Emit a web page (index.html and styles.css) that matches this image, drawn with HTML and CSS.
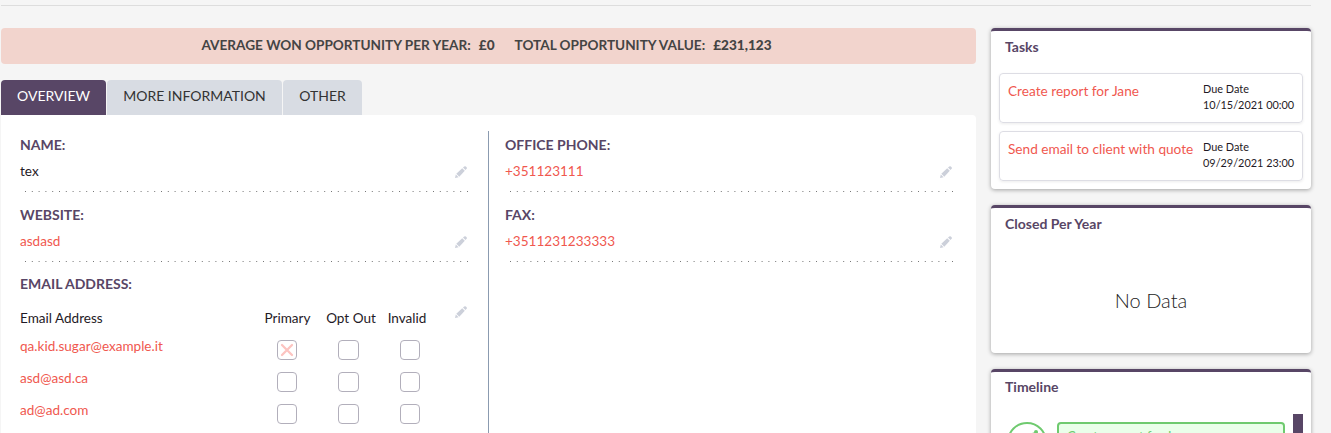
FILE: index.html
```
<!DOCTYPE html>
<html lang="en">
<head>
<meta charset="utf-8">
<title>Account</title>
<link rel="stylesheet" href="styles.css">
</head>
<body>
<svg class="defs" width="0" height="0">
  <symbol id="pencil" viewBox="0 0 12 12"><path d="M0 12 .8 8.4 3.6 11.2ZM1.3 7.7 7.2 2.2 9.8 4.8 4.3 10.7ZM8 1.5 9.2.5Q10.1-.2 10.9.5L11.6 1.2Q12.3 2 11.6 2.8L10.5 4Z"/></symbol>
  <symbol id="dots" viewBox="0 0 444 1"><path d="M0 .5H444" stroke="#777" stroke-width="1" stroke-dasharray="1 5.8" fill="none"/></symbol>
</svg>
<div class="page">
  <hr class="rule">
  <div class="columns">
    <main class="main">
      <div class="insight"><span class="term">AVERAGE WON OPPORTUNITY PER YEAR:</span><b class="avg">£0</b><span class="term total">TOTAL OPPORTUNITY VALUE:</span><b>£231,123</b></div>
      <nav class="tabs">
        <a class="tab active">OVERVIEW</a><a class="tab more">MORE INFORMATION</a><a class="tab other">OTHER</a>
      </nav>
      <section class="detail">
        <div class="col">
          <div class="field"><div class="label">NAME:</div><div class="value plain"><span>tex</span><svg class="edit"><use href="#pencil"/></svg></div><svg class="dots"><use href="#dots"/></svg></div>
          <div class="field"><div class="label">WEBSITE:</div><div class="value"><span>asdasd</span><svg class="edit"><use href="#pencil"/></svg></div><svg class="dots"><use href="#dots"/></svg></div>
          <div class="field">
            <div class="label email-label">EMAIL ADDRESS:</div>
            <div class="email-wrap">
              <div class="emails">
                <span class="head">Email Address</span><span class="head c">Primary</span><span class="head c optout">Opt Out</span><span class="head c invalid">Invalid</span>
                <span class="mail">qa.kid.sugar@example.it</span><i class="box"><svg class="cross" viewBox="0 0 14 14"><path d="M2 2 12 12M12 2 2 12"/></svg></i><i class="box wide"></i><i class="box"></i>
                <span class="mail">asd@asd.ca</span><i class="box"></i><i class="box wide"></i><i class="box"></i>
                <span class="mail">ad@ad.com</span><i class="box"></i><i class="box wide"></i><i class="box"></i>
              </div>
              <svg class="edit"><use href="#pencil"/></svg>
            </div>
          </div>
        </div>
        <div class="col right">
          <div class="field"><div class="label">OFFICE PHONE:</div><div class="value"><span>+351123111</span><svg class="edit"><use href="#pencil"/></svg></div><svg class="dots"><use href="#dots"/></svg></div>
          <div class="field"><div class="label">FAX:</div><div class="value"><span>+3511231233333</span><svg class="edit"><use href="#pencil"/></svg></div><svg class="dots"><use href="#dots"/></svg></div>
        </div>
      </section>
    </main>
    <aside class="side">
      <section class="card tasks">
        <h2>Tasks</h2>
        <div class="task"><a>Create report for Jane</a><div class="due">Due Date<br>10/15/2021 00:00</div></div>
        <div class="task"><a>Send email to client with quote</a><div class="due">Due Date<br>09/29/2021 23:00</div></div>
      </section>
      <section class="card chart"><h2>Closed Per Year</h2><div class="empty">No Data</div></section>
      <section class="card timeline">
        <h2>Timeline</h2>
        <div class="feed">
          <svg class="badge" viewBox="0 0 40 40"><circle cx="20" cy="20" r="19"/><path d="M12 24 27 11"/><circle class="dot" cx="29" cy="10" r="2"/></svg>
          <div class="event">Create report for Jane</div>
          <div class="thumb"></div>
        </div>
      </section>
    </aside>
  </div>
</div>
</body>
</html>
```
FILE: styles.css
```
* { box-sizing: border-box; }
body { margin: 0; background: #f5f5f5; font: 13px/18px Lato, sans-serif; color: #1f1a26; overflow: hidden; }
.defs { display: block; height: 0; }
.page { height: 433px; overflow: hidden; padding: 5px 20px 0 1px; }
.rule { margin: 0 0 22px; border: 0; height: 1px; background: #ddd; }
.columns { display: flex; gap: 15px; }
.main { width: 975px; flex: none; }
.insight { height: 36px; background: #f2d4cd; border-radius: 4px; display: flex; justify-content: center; align-items: center; padding: 0 4px 2px 0; font-size: 13.6px; color: #444; font-weight: 700; }
.avg { margin-right: 20px; }
.term { margin-right: 8px; }
.tabs { display: flex; gap: 1px; margin-top: 16px; }
.tab { height: 35px; line-height: 32px; text-align: center; font-size: 14px; background: #d8dce3; border-radius: 4px 4px 0 0; color: #333; width: 105px; }
.tab.more { width: 175px; }
.tab.other { width: 79px; }
.tab.active { background: #584666; color: #fff; }
.detail { display: flex; background: #fff; height: 330px; padding-top: 16px; border-radius: 0 4px 0 0; }
.col { width: 487px; padding-left: 19px; }
.col.right { width: 488px; border-left: 1px solid #8b9bb0; padding-left: 16px; }
.field { height: 70px; padding-top: 5px; }
.label { height: 18px; font-size: 14px; font-weight: 700; color: #584666; }
.value { height: 18px; margin-top: 8px; display: flex; justify-content: space-between; align-items: center; width: 447px; color: #f0584f; font-size: 13.55px; }
.value .edit { margin-top: 1px; }
.plain { color: #1f1a26; }
.edit { width: 12px; height: 12px; fill: #ccd0da; flex: none; overflow: visible; }
.dots { display: block; width: 444px; height: 1px; margin: 11px 0 0 5px; }
.email-label { margin-top: -1px; }
.email-wrap { display: flex; width: 447px; justify-content: space-between; }
.email-wrap .edit { margin-top: 13px; }
.emails { display: grid; grid-template-columns: 236px 61px 62px 61px; grid-template-rows: 31px 32px 32px 32px; margin-top: 11px; }
.head { font-size: 13.55px; padding-top: 5px; color: #1f1a26; }
.c { text-align: center; padding-left: 2px; }
.optout { padding-left: 6px; }
.invalid { padding: 5px 5px 0 0; }
.mail { color: #f0584f; font-size: 13.55px; padding-top: 2px; }
.box { width: 20px; height: 20px; border: 1px solid #b2afbb; border-radius: 4px; justify-self: center; margin-top: 5px; display: grid; place-items: center; }
.box.wide { width: 21px; }
.cross { width: 14px; height: 14px; fill: none; stroke: #fcc4c1; stroke-width: 2.3; stroke-linecap: round; }
.side { width: 320px; flex: none; }
.card { background: #fff; border-top: 3px solid #584666; border-radius: 4px; box-shadow: 0 1px 4px rgba(0,0,0,.35); margin-bottom: 16px; padding: 0 8px; overflow: hidden; }
h2 { margin: 7px 6px 17px; font-size: 14px; line-height: 18px; font-weight: 700; color: #584666; }
.tasks { height: 161px; }
.task { display: flex; justify-content: space-between; height: 50px; margin-bottom: 8px; border: 1px solid #dddde4; border-radius: 4px; box-shadow: 0 1px 3px rgba(0,0,0,.08); padding: 8px; color: #f0584f; font-size: 13.65px; }
.due { width: 91px; white-space: nowrap; font-size: 10.9px; line-height: 16px; color: #1f1a26; margin-top: -1px; }
.chart { height: 148px; }
.empty { text-align: center; font-size: 20px; font-weight: 300; line-height: 24px; margin-top: 55px; color: #222; }
.timeline { height: 180px; }
.timeline h2 { margin-top: 6px; margin-bottom: 18px; }
.feed { display: flex; }
.badge { width: 40px; height: 40px; margin: 8px 10px 0 8px; fill: none; stroke: #6fca6f; stroke-width: 2; }
.badge .dot { fill: #6fca6f; stroke: none; }
.event { width: 228px; height: 60px; margin: 8px 8px 0 0; border: 2px solid #6fca6f; border-radius: 4px; background: #eaffea; color: #6fca6f; padding: 3px 8px; font-size: 13px; }
.thumb { width: 10px; height: 90px; background: #584666; }
```
